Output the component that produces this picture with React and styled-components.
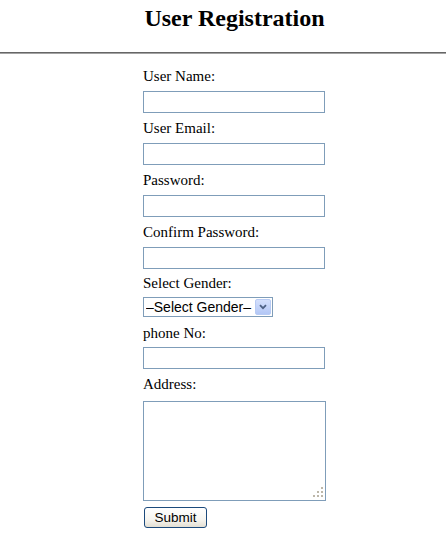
import styled, { createGlobalStyle } from 'styled-components';

const GlobalStyle = createGlobalStyle`
  html, body {
    margin: 0;
    padding: 0;
    background: #fff;
  }
  body {
    font-family: "Liberation Serif", "Times New Roman", serif;
    color: #000;
  }
`;

const Page = styled.div`
  display: flex;
  flex-direction: column;
  width: 446px;
`;

const Column = styled.div`
  width: 183px;
  margin-left: 143px;
  display: flex;
  flex-direction: column;
  align-items: flex-start;
`;

const Title = styled.h2`
  margin: 4px 0 0;
  align-self: stretch;
  text-align: center;
  font-size: 24px;
  line-height: 28px;
  font-weight: bold;
  white-space: nowrap;
`;

const Rule = styled.hr`
  margin: 20px 0 0;
  height: 0;
  border: none;
  border-top: 1px solid #666;
  border-bottom: 1px solid #a3a3a3;
`;

const Form = styled(Column).attrs({ as: 'form' })`
  padding-top: 7px;
`;

const Label = styled.label`
  display: block;
  font-size: 15px;
  line-height: 20px;
  margin-top: ${p => p.$top ?? 5}px;
  margin-bottom: ${p => p.$bottom ?? 5}px;
`;

const TextInput = styled.input`
  box-sizing: border-box;
  width: 182px;
  height: 22px;
  margin: 0;
  padding: 1px 3px;
  border: 1px solid #7f9db9;
  background: #fff;
  font-family: "Liberation Sans", Arial, sans-serif;
  font-size: 13px;
  outline: none;
`;

const SelectBox = styled.div`
  position: relative;
  box-sizing: border-box;
  width: 130px;
  height: 20px;
  border: 1px solid #7f9db9;
  background: #fff;
  display: flex;
  align-items: center;
`;

const NativeSelect = styled.select`
  appearance: none;
  -webkit-appearance: none;
  border: none;
  outline: none;
  background: transparent;
  margin: 0;
  padding: 0 0 0 2px;
  width: 100%;
  height: 18px;
  font-family: "Liberation Sans", Arial, sans-serif;
  font-size: 14px;
  line-height: 18px;
  color: #000;
`;

const ArrowButton = styled.span`
  position: absolute;
  top: 1px;
  right: 1px;
  width: 16px;
  height: 16px;
  box-sizing: border-box;
  border: 1px solid #b8cbf4;
  border-radius: 2px;
  background: linear-gradient(#d4e0fd, #b3c7f6);
  display: flex;
  align-items: center;
  justify-content: center;
  pointer-events: none;
`;

const AreaWrap = styled.div`
  position: relative;
  width: 183px;
  height: 100px;
`;

const TextArea = styled.textarea`
  box-sizing: border-box;
  width: 183px;
  height: 100px;
  margin: 0;
  padding: 2px;
  border: 1px solid #7f9db9;
  resize: none;
  outline: none;
  font-family: "Liberation Mono", monospace;
  font-size: 13px;
`;

const Grip = styled.svg`
  position: absolute;
  right: 2px;
  bottom: 3px;
`;

const SubmitButton = styled.button`
  margin: 6px 0 0 1px;
  box-sizing: border-box;
  width: 63px;
  height: 21px;
  padding: 0;
  border: 1px solid #1c4a7c;
  border-radius: 3px;
  background: linear-gradient(#ffffff, #f6f5f0 60%, #e3dfd3);
  font-family: "Liberation Sans", Arial, sans-serif;
  font-size: 13.5px;
  line-height: 19px;
  color: #000;
`;

const Field = ({ label, type = 'text', name }) => (
  <>
    <Label htmlFor={name}>{label}</Label>
    <TextInput id={name} name={name} type={type} />
  </>
);

export default function App() {
  return (
    <Page>
      <GlobalStyle />
      <Column>
        <Title>User Registration</Title>
      </Column>
      <Rule />
      <Form onSubmit={e => e.preventDefault()}>
        <Field label="User Name:" name="uname" />
        <Field label="User Email:" name="email" />
        <Field label="Password:" name="pass" type="password" />
        <Field label="Confirm Password:" name="cpass" type="password" />

        <Label htmlFor="gender" $top={4} $bottom={4}>Select Gender:</Label>
        <SelectBox>
          <NativeSelect id="gender" name="gender" defaultValue="">
            <option value="">–Select Gender–</option>
            <option value="m">Male</option>
            <option value="f">Female</option>
          </NativeSelect>
          <ArrowButton>
            <svg width="8" height="6" viewBox="0 0 8 6">
              <path d="M1 1.2 L4 4.2 L7 1.2" fill="none" stroke="#4d6185" strokeWidth="1.8" />
            </svg>
          </ArrowButton>
        </SelectBox>

        <Label htmlFor="phone" $top={6} $bottom={4}>phone No:</Label>
        <TextInput id="phone" name="phone" />

        <Label htmlFor="address" $top={5} $bottom={7}>Address:</Label>
        <AreaWrap>
          <TextArea id="address" name="address" />
          <Grip width="11" height="11" viewBox="0 0 11 11">
            <g fill="#bdb7a9">
              <rect x="8" y="0" width="2" height="2" />
              <rect x="4" y="4" width="2" height="2" />
              <rect x="8" y="4" width="2" height="2" />
              <rect x="0" y="8" width="2" height="2" />
              <rect x="4" y="8" width="2" height="2" />
              <rect x="8" y="8" width="2" height="2" />
            </g>
          </Grip>
        </AreaWrap>

        <SubmitButton type="submit">Submit</SubmitButton>
      </Form>
    </Page>
  );
}
